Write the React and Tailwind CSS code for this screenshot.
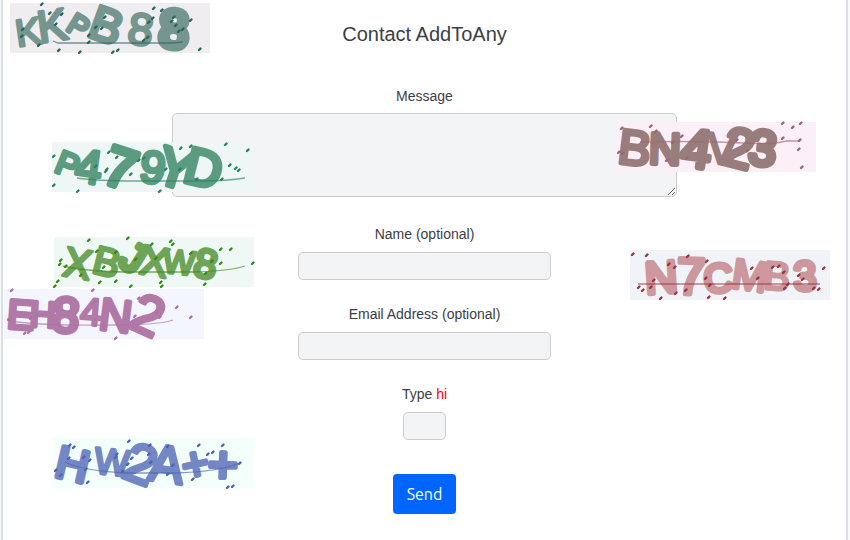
import React from "react";

// Each glyph: character, centre x, centre y, height, rotation, stroke weight
const captchas = [
  {
    label: "KKPB88", place: "left-[10px] top-[3px]", bg: "#f0edf0", ink: "#75958f", dark: "#28665c", curve: "M43 38 L48 40 H163 L173 39",
    glyphs: [["K", 18, 28, 31, -8, 3], ["K", 42, 21, 36, -8, 3], ["P", 69, 22, 25, 32, 4], ["B", 97, 21, 39, 20, 4], ["8", 131, 25, 36, 8, 3], ["8", 164, 25, 46, 3, 8]],
    dots: [[31,1],[39,10],[51,11],[45,21],[12,26],[11,33],[28,42],[48,47],[69,49],[94,14],[85,24],[91,25],[78,32],[78,39],[102,49],[107,47],[143,5],[151,7],[142,15],[138,19],[137,34],[133,37],[163,14],[161,18],[165,22],[172,26],[168,28],[180,17],[189,46]],
  },
  {
    label: "P479YD", place: "left-[52px] top-[142px]", bg: "#eef7f5", ink: "#5b9b80", dark: "#268460", curve: "M25 36 Q45 39 80 39 H150 Q175 39 193 36",
    glyphs: [["P", 16, 22, 28, 22, 4], ["4", 37, 24, 38, 8, 4], ["7", 69, 25, 46, 18, 6], ["9", 101, 24, 37, 8, 4], ["Y", 124, 25, 44, 18, 5], ["D", 152, 25, 42, 14, 5]],
    dots: [[1,14],[1,43],[25,49],[56,10],[64,15],[43,24],[54,27],[53,29],[78,32],[86,18],[91,16],[128,6],[138,4],[113,27],[127,27],[144,37],[169,37],[173,2],[195,8],[177,23],[183,26],[186,28],[107,49]],
  },
  {
    label: "BN4V23", place: "left-[616px] top-[122px]", bg: "#fcf0f8", ink: "#997d7c", dark: "#9c6672", curve: "M24 20 Q65 19 100 20 Q145 22 160 21 L171 19 H184",
    glyphs: [["B", 19, 25, 40, 7, 4], ["N", 49, 26, 37, 2, 5], ["4", 81, 25, 45, 8, 6], ["V", 106, 26, 35, 4, 3], ["2", 123, 25, 45, 14, 5], ["3", 147, 25, 42, 6, 6]],
    dots: [[5,6],[2,30],[6,31],[34,4],[39,9],[65,14],[50,38],[70,36],[56,20],[120,18],[131,28],[166,16],[166,1],[176,5],[184,1],[183,18],[182,27],[185,45]],
  },
  {
    label: "XBJXW8", place: "left-[54px] top-[237px]", bg: "#eff8f4", ink: "#6da457", dark: "#348b18", curve: "M9 29 Q35 35 80 35 H140 Q175 34 191 29",
    glyphs: [["X", 24, 25, 34, 10, 3], ["B", 53, 24, 32, 14, 3], ["J", 80, 20, 36, 32, 6], ["X", 101, 23, 34, 10, 3], ["W", 125, 24, 28, 6, 3], ["8", 152, 26, 34, 12, 4]],
    dots: [[34,3],[42,14],[6,23],[5,27],[11,29],[3,44],[0,49],[26,38],[45,45],[61,44],[61,15],[49,30],[73,1],[81,22],[76,49],[97,7],[101,21],[106,45],[107,49],[116,4],[118,7],[136,16],[157,24],[150,47],[151,36],[166,12],[176,12],[166,26],[198,26]],
  },
  {
    label: "EH84N2", place: "left-[4px] top-[289px]", bg: "#f4f6ff", ink: "#b179a8", dark: "#ad72a4", curve: "M4 29 Q3 33 13 33 Q50 37 110 36 Q155 36 169 31",
    glyphs: [["E", 17, 25, 34, 4, 4], ["H", 39, 25, 30, 3, 4], ["8", 62, 25, 41, 5, 5], ["4", 87, 22, 31, 4, 3], ["N", 112, 25, 37, 7, 4], ["2", 144, 25, 44, 24, 4]],
    dots: [[7,1],[4,30],[26,29],[32,26],[20,44],[24,43],[88,1],[111,49],[134,9],[130,27],[152,23],[155,28],[172,18],[186,28]],
  },
  {
    label: "N7CMB3", place: "left-[630px] top-[250px]", bg: "#f0f4f8", ink: "#cc989e", dark: "#9c3440", curve: "M8 34 H190",
    glyphs: [["N", 31, 26, 38, -4, 5], ["7", 61, 25, 42, 2, 5], ["C", 88, 27, 34, -4, 5], ["M", 120, 24, 35, 8, 4], ["B", 147, 25, 32, 5, 3], ["3", 175, 25, 35, -2, 5]],
    dots: [[2,4],[16,5],[38,14],[44,17],[57,6],[76,11],[75,28],[23,30],[20,37],[8,37],[12,40],[30,48],[45,43],[55,40],[79,35],[78,47],[94,48],[121,18],[127,28],[142,17],[148,16],[153,22],[157,34],[154,38],[168,25],[172,29],[183,38],[188,39],[193,18]],
  },
  {
    label: "HW2A++", place: "left-[53px] top-[438px]", bg: "#f3fffb", ink: "#7487c5", dark: "#4c62b3", curve: "M12 24 Q30 33 75 35 H120 Q165 34 187 25",
    glyphs: [["H", 20, 25, 38, 13, 5], ["W", 59, 23, 30, 6, 3], ["2", 88, 25, 44, 20, 4], ["A", 114, 25, 42, 8, 4], ["+", 142, 25, 38, -12, 4], ["+", 170, 25, 42, 2, 5]],
    dots: [[16,7],[20,9],[15,20],[2,32],[7,37],[32,31],[34,44],[36,22],[30,19],[63,16],[62,19],[74,26],[78,20],[69,33],[75,3],[95,16],[96,7],[97,24],[114,8],[119,27],[114,36],[145,7],[154,16],[159,14],[139,41],[169,7],[174,49],[179,48],[186,25]],
  },
];

function Captcha({ item }) {
  return (
    <svg role="img" aria-label={item.label} width="200" height="50" viewBox="0 0 200 50" className={`absolute overflow-visible ${item.place}`} style={{ background: item.bg }}>
      <g fill={item.ink} stroke={item.ink} strokeLinejoin="round" textAnchor="middle" fontFamily="'Liberation Sans Narrow', 'Liberation Sans', sans-serif">
        {item.glyphs.map(([char, cx, cy, height, angle, weight], i) => (
          <text key={i} x={cx} y={cy + Math.round((height - weight) / 2)} fontSize={Math.round((height - weight) / 0.73)} strokeWidth={weight} transform={`rotate(${angle} ${cx} ${cy})`}>{char}</text>
        ))}
      </g>
      <path d={item.curve} fill="none" stroke={item.dark} strokeOpacity="0.65" strokeWidth="1.3" />
      <g stroke={item.dark} strokeWidth="2.4" strokeLinecap="round">
        {item.dots.map(([x, y], i) => <path key={i} d={`M${x} ${y + 1} l1.5 -1.5`} />)}
      </g>
    </svg>
  );
}

const field = "block rounded-[5px] border border-[#ccc] bg-[#f3f4f6] outline-none";
const label = "block text-sm leading-6";

export default function App() {
  return (
    <div className="relative min-h-screen bg-[#f8f9fa] pl-px pr-0.5 font-['Liberation_Sans',Arial,sans-serif] text-[#3b4045]">
      <main className="min-h-screen border-x-2 border-[#dcdfe6] bg-white pt-[18px]">
        <h1 className="text-center text-xl leading-8">Contact AddToAny</h1>
        <form className="mt-[34px] flex flex-col items-center" onSubmit={(e) => e.preventDefault()}>
          <label htmlFor="message" className={label}>Message</label>
          <textarea id="message" className={`${field} mt-[5px] h-[84px] w-3/5`} />
          <label htmlFor="name" className={`${label} mt-[25px]`}>Name (optional)</label>
          <input id="name" type="text" className={`${field} mt-[6px] h-7 w-[30%]`} />
          <label htmlFor="email" className={`${label} mt-[22px]`}>Email Address (optional)</label>
          <input id="email" type="email" className={`${field} mt-[6px] h-7 w-[30%]`} />
          <label htmlFor="check" className={`${label} mt-[22px]`}>Type <span className="text-[#f00]">hi</span></label>
          <input id="check" type="text" className={`${field} mt-[6px] h-7 w-[5%]`} />
          <button type="submit" className="mt-[34px] h-10 rounded bg-[#0166ff] px-3.5 font-['Ubuntu','Noto_Sans',sans-serif] text-base text-white">Send</button>
        </form>
      </main>
      {captchas.map((item) => <Captcha key={item.label} item={item} />)}
    </div>
  );
}
